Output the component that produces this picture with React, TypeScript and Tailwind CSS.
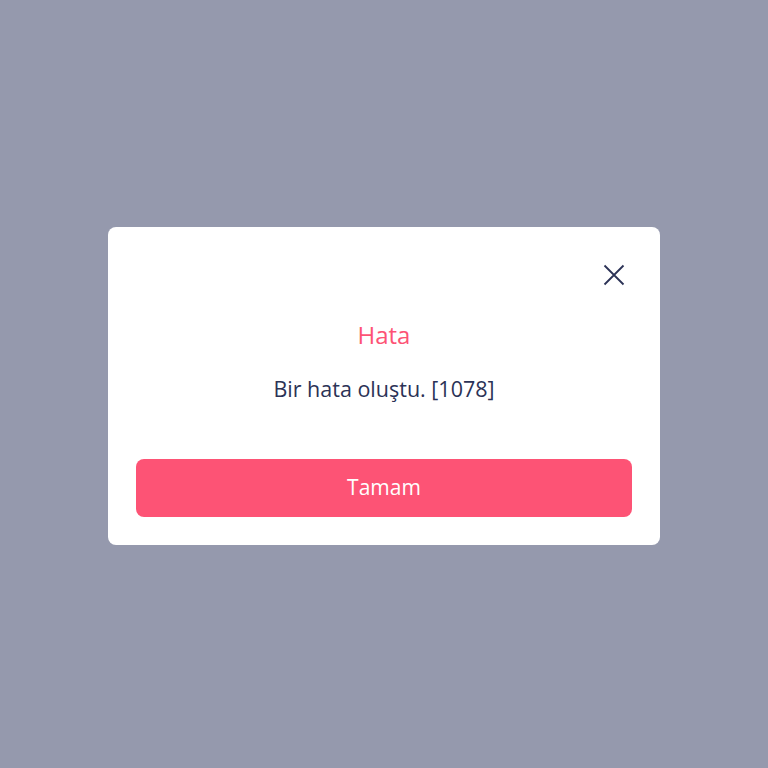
import React from 'react';

const ErrorDialog = () => {
  return (
    <div className="mt-1 w-[552px] rounded-lg bg-white px-7 pt-[34px] pb-7">
      <div className="flex justify-end pr-[4px]">
        <button className="text-[#2b3256]" aria-label="Kapat">
          <svg width="28" height="28" viewBox="0 0 28 28" fill="none" stroke="currentColor" strokeWidth="1.8">
            <path d="M4.5 4.5L23.5 23.5M23.5 4.5L4.5 23.5" />
          </svg>
        </button>
      </div>
      <h2 className="mt-[31px] text-center text-[24px] leading-[30px] text-[#fd5375]">Hata</h2>
      <p className="mt-6 text-center text-[21.5px] leading-[30px] text-[#2b3256]">Bir hata oluştu. [1078]</p>
      <button className="mt-[55px] h-[58px] w-full rounded-lg bg-[#fd5375] text-[21px] text-white">Tamam</button>
    </div>
  );
};

export default function App() {
  return (
    <div
      className="flex h-[768px] w-full items-center justify-center bg-[#9599ad]"
      style={{ fontFamily: '"Open Sans", "Noto Sans", sans-serif' }}
    >
      <ErrorDialog />
    </div>
  );
}
